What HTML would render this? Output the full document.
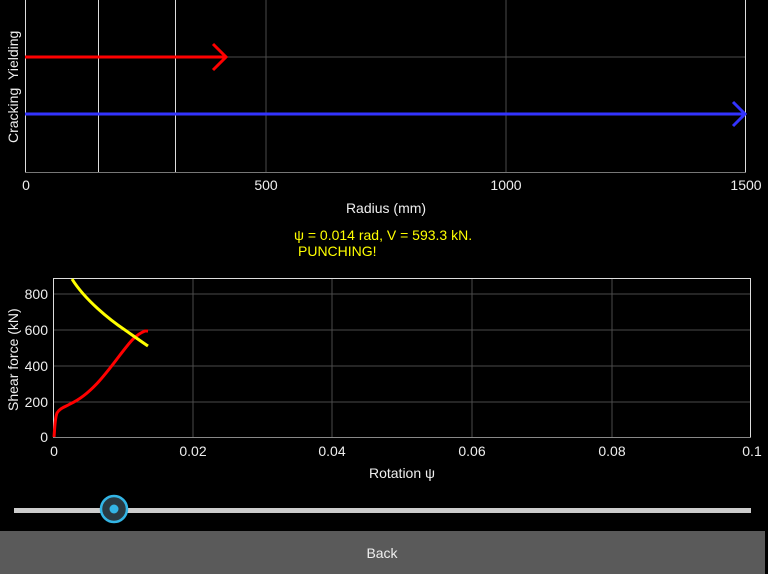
<!DOCTYPE html>
<html><head><meta charset="utf-8"><style>
html,body{margin:0;padding:0;background:#000;width:768px;height:574px;overflow:hidden}
svg{display:block}
text{font-family:"Liberation Sans",sans-serif}
</style></head><body>
<svg width="768" height="574" viewBox="0 0 768 574">
<rect width="768" height="574" fill="#000"/>
<g stroke="#4a4a4a" stroke-width="1">
<line x1="266" y1="0" x2="266" y2="172"/>
<line x1="506" y1="0" x2="506" y2="172"/>
<line x1="25" y1="57" x2="746" y2="57"/>
</g>
<line x1="25.5" y1="0" x2="25.5" y2="172" stroke="#ddd"/>
<line x1="745.5" y1="0" x2="745.5" y2="172" stroke="#ddd"/>
<line x1="25" y1="172.5" x2="746" y2="172.5" stroke="#777"/>
<line x1="98.5" y1="0" x2="98.5" y2="172" stroke="#ddd"/>
<line x1="175.5" y1="0" x2="175.5" y2="172" stroke="#ddd"/>
<g stroke="#f00" stroke-width="3" fill="none">
<line x1="25" y1="57" x2="226" y2="57"/>
<polyline points="213,44 226,57 213,70"/>
</g>
<g stroke="#33f" stroke-width="3" fill="none">
<line x1="25" y1="114" x2="745" y2="114"/>
<polyline points="733,102 745,114 733,126"/>
</g>
<text transform="translate(18,143) rotate(-90)" fill="#eee" font-size="14">Cracking&#160;&#160;Yielding</text>
<g fill="#eee" font-size="14" text-anchor="middle">
<text x="26" y="190">0</text>
<text x="266" y="190">500</text>
<text x="506" y="190">1000</text>
<text x="746" y="190">1500</text>
<text x="386" y="213">Radius (mm)</text>
</g>
<text x="294" y="240" fill="#ff0" font-size="14">ψ = 0.014 rad, V = 593.3 kN.</text>
<text x="298" y="256" fill="#ff0" font-size="14">PUNCHING!</text>
<g stroke="#4a4a4a" stroke-width="1">
<line x1="193" y1="278" x2="193" y2="437"/>
<line x1="332" y1="278" x2="332" y2="437"/>
<line x1="472" y1="278" x2="472" y2="437"/>
<line x1="612" y1="278" x2="612" y2="437"/>
<line x1="53" y1="294" x2="751" y2="294"/>
<line x1="53" y1="330" x2="751" y2="330"/>
<line x1="53" y1="366" x2="751" y2="366"/>
<line x1="53" y1="402" x2="751" y2="402"/>
</g>
<rect x="53.5" y="278.5" width="697" height="159" fill="none" stroke="#ddd"/>
<line x1="53" y1="437.5" x2="751" y2="437.5" stroke="#888"/>
<path d="M54,437 C55,425 55,418 57,413 C60,408 65,407 70,404 C90,395 105,375 120,355 C130,342 135,335 145,331 L148,331" stroke="#f00" stroke-width="3" fill="none"/>
<path d="M72,279 C85,300 110,320 125,330 C135,337 142,342 148,346" stroke="#ff0" stroke-width="3" fill="none"/>
<g fill="#eee" font-size="14" text-anchor="end">
<text x="48" y="299">800</text>
<text x="48" y="335">600</text>
<text x="48" y="371">400</text>
<text x="48" y="407">200</text>
<text x="48" y="442">0</text>
</g>
<g fill="#eee" font-size="14" text-anchor="middle">
<text x="54" y="456">0</text>
<text x="193" y="456">0.02</text>
<text x="332" y="456">0.04</text>
<text x="472" y="456">0.06</text>
<text x="612" y="456">0.08</text>
<text x="752" y="456">0.1</text>
<text x="402" y="478">Rotation ψ</text>
</g>
<text transform="translate(18,411) rotate(-90)" fill="#eee" font-size="14">Shear force (kN)</text>
<rect x="14" y="508" width="737" height="5" fill="#ccc"/>
<circle cx="114" cy="509" r="13" fill="#2a3a42" stroke="#33b5e5" stroke-width="2.5"/>
<circle cx="114" cy="509" r="4.5" fill="#33b5e5"/>
<rect x="0" y="531" width="765" height="43" fill="#5a5a5a"/>
<text x="382" y="558" fill="#eee" font-size="14" text-anchor="middle">Back</text>
</svg>
</body></html>
